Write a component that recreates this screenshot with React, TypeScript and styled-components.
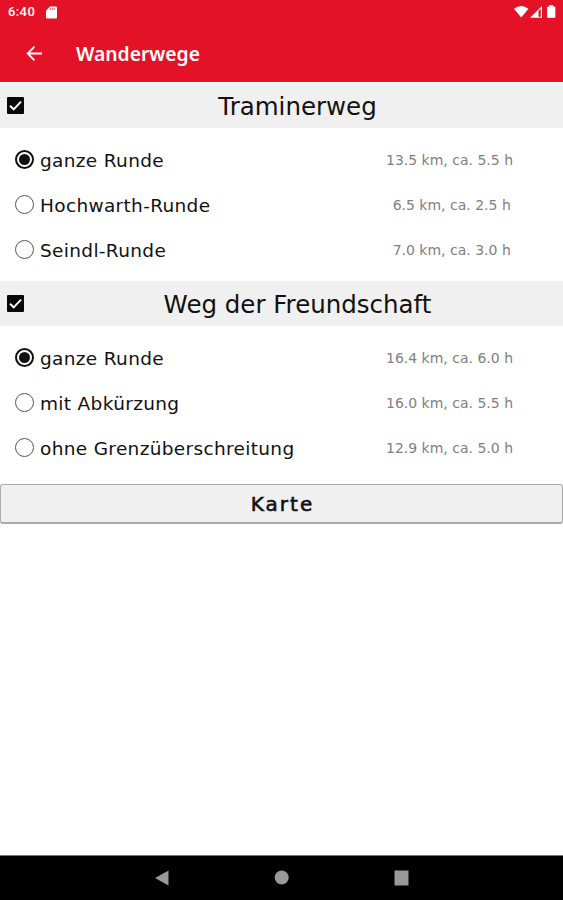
import React, { useState } from "react";
import styled, { createGlobalStyle } from "styled-components";

const GlobalStyle = createGlobalStyle`
  * { box-sizing: border-box; }
  body { margin: 0; background: #fff; font-family: "DejaVu Sans", sans-serif; color: #111; }
`;

const Screen = styled.div`
  height: 900px;
  display: flex;
  flex-direction: column;
`;

const Header = styled.header`
  height: 82px;
  flex: none;
  background: #e31226;
  color: #fff;
`;

const StatusBar = styled.div`
  height: 24px;
  padding: 0 6px 0 8px;
  display: flex;
  align-items: center;
  justify-content: space-between;
`;

const StatusGroup = styled.div`
  display: flex;
  align-items: center;
  gap: 11px;
`;

const Clock = styled.span`
  font: 500 13px/24px Roboto, sans-serif;
  letter-spacing: 0.4px;
`;

const TitleBar = styled.div`
  height: 58px;
  padding: 1px 0 0 24px;
  display: flex;
  align-items: center;
  gap: 32px;
`;

const BackButton = styled.button`
  width: 20px;
  height: 20px;
  padding: 0;
  border: 0;
  background: none;
  display: flex;
`;

const Title = styled.h1`
  margin: 0;
  font: 600 19.3px/28px "Noto Sans", sans-serif;
`;

const Content = styled.main`
  flex: 1;
  padding-top: 1px;
`;

const SectionHeader = styled.div`
  height: 45px;
  display: grid;
  grid-template-columns: 32px 1fr;
  align-items: center;
  background: #f0f0f0;
`;

const CheckButton = styled.button`
  width: 17px;
  height: 17px;
  margin: 0 0 1px 7px;
  padding: 0;
  border: 0;
  background: none;
  display: flex;
`;

const SectionTitle = styled.h2`
  margin: 0;
  padding-top: 2px;
  text-align: center;
  font-size: 24.5px;
  font-weight: 400;
  line-height: 43px;
`;

const Options = styled.div`
  height: 153px;
  padding: 10px 0 8px;
`;

const OptionRow = styled.label`
  height: 45px;
  display: grid;
  grid-template-columns: 40px 297px 225px;
  align-items: center;
`;

const Radio = styled.span<{ $on: boolean }>`
  width: 19px;
  height: 19px;
  margin: 0 0 2px 15px;
  border: ${(p) => (p.$on ? "2px solid #111" : "1.5px solid #555")};
  border-radius: 50%;
  display: grid;
  place-items: center;

  &::after {
    content: "";
    width: 11px;
    height: 11px;
    border-radius: 50%;
    background: ${(p) => (p.$on ? "#111" : "transparent")};
  }
`;

const OptionName = styled.span`
  font-size: 18.5px;
  letter-spacing: 0.33px;
  white-space: nowrap;
`;

const Detail = styled.span`
  padding-bottom: 2px;
  font-size: 14px;
  text-align: center;
  white-space: pre;
  color: #808080;
`;

const MapButton = styled.button`
  width: 100%;
  height: 40px;
  margin: 5px 0 0;
  display: block;
  padding: 0 0 0 2px;
  border: 1px solid #aaa;
  border-bottom-width: 2px;
  border-radius: 3px;
  background: #f0f0f0;
  color: #111;
  font: 400 20px/36px "DejaVu Sans", sans-serif;
  letter-spacing: 2px;
  -webkit-text-stroke: 0.6px #111;
`;

const NavBar = styled.nav`
  height: 45px;
  border-top: 1px solid #777;
  flex: none;
  background: #000;
  display: flex;
  justify-content: center;
  align-items: center;
  gap: 104px;
`;

const sections = [
  {
    title: "Traminerweg",
    options: [
      ["ganze Runde", "13.5 km, ca. 5.5 h"],
      ["Hochwarth-Runde", " 6.5 km, ca. 2.5 h"],
      ["Seindl-Runde", " 7.0 km, ca. 3.0 h"],
    ],
  },
  {
    title: "Weg der Freundschaft",
    options: [
      ["ganze Runde", "16.4 km, ca. 6.0 h"],
      ["mit Abkürzung", "16.0 km, ca. 5.5 h"],
      ["ohne Grenzüberschreitung", "12.9 km, ca. 5.0 h"],
    ],
  },
];

function Section({ title, options }: { title: string; options: string[][] }) {
  const [checked, setChecked] = useState(true);
  const [selected, setSelected] = useState(0);
  return (
    <section>
      <SectionHeader>
        <CheckButton aria-label={title} onClick={() => setChecked(!checked)}>
          <svg width="17" height="17" viewBox="0 0 17 17">
            <rect width="17" height="17" rx="1" fill="#080808" />
            {checked && <path d="M3 8.7l3.7 3.6L14 4.6" fill="none" stroke="#fff" strokeWidth="1.9" />}
          </svg>
        </CheckButton>
        <SectionTitle>{title}</SectionTitle>
      </SectionHeader>
      <Options>
        {options.map(([name, detail], i) => (
          <OptionRow key={name} onClick={() => setSelected(i)}>
            <Radio $on={selected === i} />
            <OptionName>{name}</OptionName>
            <Detail>{detail}</Detail>
          </OptionRow>
        ))}
      </Options>
    </section>
  );
}

export default function App() {
  return (
    <Screen>
      <GlobalStyle />
      <Header>
        <StatusBar>
          <StatusGroup>
            <Clock>6:40</Clock>
            <svg width="11" height="13" viewBox="0 0 11 13">
              <path d="M4 .5h6q1 0 1 1v10q0 1-1 1H1q-1 0-1-1v-7z" fill="#fff" />
              <path d="M4.3 2v2M6.3 2v2M8.3 2v2" stroke="#e31226" strokeWidth=".7" />
            </svg>
          </StatusGroup>
          <svg width="43" height="14" viewBox="0 0 43 14">
            <path d="M0 3.8Q7.2-1.6 14.4 3.8L7.2 12.5z" fill="#fff" />
            <path d="M16 12.8L28 1v11.8z" fill="#fff" />
            <path d="M24.5 6l2.3-2.3v8h-2.3z" fill="#e31226" />
            <path d="M33.5 2h2V.5h3.5V2h2v10.5h-7.5z" fill="#fff" stroke="#fff" strokeWidth=".7" strokeLinejoin="round" />
          </svg>
        </StatusBar>
        <TitleBar>
          <BackButton aria-label="Zurück">
            <svg width="20" height="20" viewBox="0 0 20 20">
              <path d="M18 9.5H4M10.5 2.7L3.7 9.5l6.8 6.8" fill="none" stroke="#fff" strokeWidth="1.9" />
            </svg>
          </BackButton>
          <Title>Wanderwege</Title>
        </TitleBar>
      </Header>
      <Content>
        {sections.map((s) => (
          <Section key={s.title} {...s} />
        ))}
        <MapButton>Karte</MapButton>
      </Content>
      <NavBar>
        <svg width="16" height="16" viewBox="0 0 16 16"><path d="M1 8L14.5.5v15z" fill="#999" /></svg>
        <svg width="16" height="16" viewBox="0 0 16 16"><circle cx="7.7" cy="7.5" r="7" fill="#999" /></svg>
        <svg width="16" height="16" viewBox="0 0 16 16"><rect x=".5" y=".5" width="14" height="15" fill="#999" /></svg>
      </NavBar>
    </Screen>
  );
}
